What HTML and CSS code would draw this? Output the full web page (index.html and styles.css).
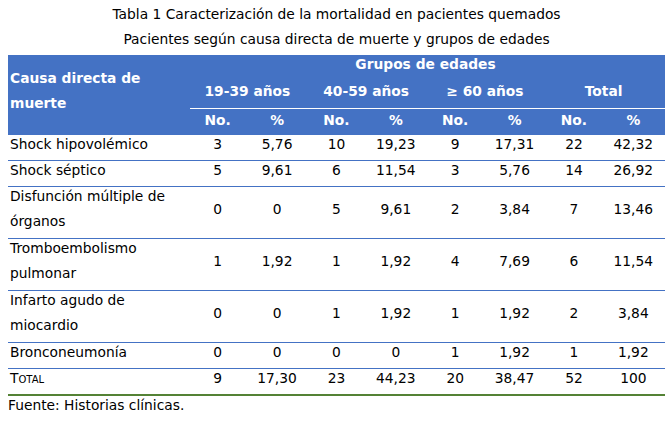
FILE: index.html
```html
<!DOCTYPE html>
<html lang="es">
<head>
<meta charset="utf-8">
<title>Tabla 1</title>
<link rel="stylesheet" href="styles.css">
</head>
<body>
<div class="page">
  <p class="caption">Tabla 1 Caracterización de la mortalidad en pacientes quemados</p>
  <p class="caption">Pacientes según causa directa de muerte y grupos de edades</p>
  <table class="data">
    <colgroup>
      <col class="c-cause">
      <col><col><col><col><col><col><col><col>
    </colgroup>
    <thead>
      <tr class="h1">
        <th class="cause" rowspan="3">Causa directa de muerte</th>
        <th colspan="8">Grupos de edades</th>
      </tr>
      <tr class="h2">
        <th colspan="2">19-39 años</th>
        <th colspan="2">40-59 años</th>
        <th colspan="2">≥ 60 años</th>
        <th colspan="2">Total</th>
      </tr>
      <tr class="h3">
        <th>No.</th><th>%</th>
        <th>No.</th><th>%</th>
        <th>No.</th><th>%</th>
        <th>No.</th><th>%</th>
      </tr>
    </thead>
    <tbody>
      <tr>
        <td class="name"><span>Shock hipovolémico</span></td>
        <td><span>3</span></td><td><span>5,76</span></td><td><span>10</span></td><td><span>19,23</span></td><td><span>9</span></td><td><span>17,31</span></td><td><span>22</span></td><td><span>42,32</span></td>
      </tr>
      <tr>
        <td class="name"><span>Shock séptico</span></td>
        <td><span>5</span></td><td><span>9,61</span></td><td><span>6</span></td><td><span>11,54</span></td><td><span>3</span></td><td><span>5,76</span></td><td><span>14</span></td><td><span>26,92</span></td>
      </tr>
      <tr class="two">
        <td class="name"><span>Disfunción múltiple de órganos</span></td>
        <td><span>0</span></td><td><span>0</span></td><td><span>5</span></td><td><span>9,61</span></td><td><span>2</span></td><td><span>3,84</span></td><td><span>7</span></td><td><span>13,46</span></td>
      </tr>
      <tr class="two">
        <td class="name"><span>Tromboembolismo pulmonar</span></td>
        <td><span>1</span></td><td><span>1,92</span></td><td><span>1</span></td><td><span>1,92</span></td><td><span>4</span></td><td><span>7,69</span></td><td><span>6</span></td><td><span>11,54</span></td>
      </tr>
      <tr class="two">
        <td class="name"><span>Infarto agudo de miocardio</span></td>
        <td><span>0</span></td><td><span>0</span></td><td><span>1</span></td><td><span>1,92</span></td><td><span>1</span></td><td><span>1,92</span></td><td><span>2</span></td><td><span>3,84</span></td>
      </tr>
      <tr>
        <td class="name"><span>Bronconeumonía</span></td>
        <td><span>0</span></td><td><span>0</span></td><td><span>0</span></td><td><span>0</span></td><td><span>1</span></td><td><span>1,92</span></td><td><span>1</span></td><td><span>1,92</span></td>
      </tr>
      <tr class="total">
        <td class="name"><span>Total</span></td>
        <td><span>9</span></td><td><span>17,30</span></td><td><span>23</span></td><td><span>44,23</span></td><td><span>20</span></td><td><span>38,47</span></td><td><span>52</span></td><td><span>100</span></td>
      </tr>
    </tbody>
  </table>
  <p class="source">Fuente: Historias clínicas.</p>
</div>
</body>
</html>
```

FILE: styles.css
```css
html, body {
  margin: 0;
  padding: 0;
  background: #ffffff;
}

body {
  font-family: "DejaVu Sans", Verdana, sans-serif;
  font-size: 13.8px;
  color: #000000;
}

.page {
  padding: 2px 6px 0 8px;
}

.caption {
  margin: 0;
  text-align: center;
  line-height: 25px;
}

.data {
  width: 657px;
  border-collapse: collapse;
  table-layout: fixed;
  margin-top: 3px;
  border-bottom: 2px solid #548235;
}

.c-cause {
  width: 182px;
}

.data th {
  background: #4472c4;
  color: #ffffff;
  font-weight: bold;
  padding: 0 4px 0 0;
  text-align: center;
}

.data th.cause {
  text-align: left;
  line-height: 25px;
  padding: 0 0 9px 2px;
}

.h1 th {
  height: 18px;
  line-height: 18px;
}

.h2 th {
  height: 33px;
  padding-top: 2px;
  line-height: 31px;
  border-bottom: 1px solid #ffffff;
}

.h3 th {
  height: 26px;
  line-height: 22px;
  vertical-align: top;
}

.data td {
  padding: 0 4px 0 0;
  line-height: 25px;
  text-align: center;
}

.data tr.two td {
  padding-bottom: 1px;
}

.data td > span {
  line-height: 16px;
  vertical-align: 3px;
}

.data tbody tr + tr td {
  border-top: 1px solid #4472c4;
}

.data td.name {
  text-align: left;
  padding-left: 2px;
  padding-right: 0;
}

.total td.name {
  font-variant: small-caps;
}

.source {
  margin: 0;
  line-height: 18px;
}
```
